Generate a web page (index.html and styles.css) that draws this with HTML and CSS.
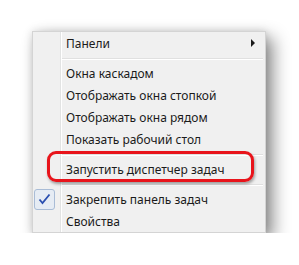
FILE: index.html
```html
<!DOCTYPE html>
<html lang="ru">
<head>
  <meta charset="UTF-8">
  <title>Меню панели задач</title>
  <link rel="stylesheet" href="styles.css">
</head>
<body>

  <div class="menu">
    <div class="item">
      <span class="icon"></span>
      <span class="label">Панели</span>
      <span class="arrow"></span>
    </div>
    <div class="sep"></div>
    <div class="item"><span class="icon"></span><span class="label">Окна каскадом</span></div>
    <div class="item"><span class="icon"></span><span class="label">Отображать окна стопкой</span></div>
    <div class="item"><span class="icon"></span><span class="label">Отображать окна рядом</span></div>
    <div class="item"><span class="icon"></span><span class="label">Показать рабочий стол</span></div>
    <div class="sep"></div>
    <div class="item marked"><span class="icon"></span><span class="label">Запустить диспетчер задач</span></div>
    <div class="sep"></div>
    <div class="item">
      <span class="icon checked">
        <svg width="13" height="12" viewBox="0 0 13 12">
          <path d="M1.5 6.5 L4.5 10 L11.5 1.5" fill="none" stroke="#2a4fb0" stroke-width="1.8"/>
        </svg>
      </span>
      <span class="label">Закрепить панель задач</span>
    </div>
    <div class="item"><span class="icon"></span><span class="label">Свойства</span></div>
  </div>

</body>
</html>
```

FILE: styles.css
```css
body {
  margin: 0;
  padding: 31px 0 0 32px;
  background: #fff;
  font-family: "Noto Sans", "Open Sans", sans-serif;
  font-size: 12px;
  color: #1b1b1b;
}

.menu {
  width: 232px;
  border: 1px solid #d4d4d4;
  background: linear-gradient(to right, #f0f0f0 27px, #e2e3e3 27px 28px, #fff 28px 29px, #f0f0f0 29px);
  box-shadow: 7px 7px 16px rgba(0, 0, 0, 0.45), 0 0 8px rgba(0, 0, 0, 0.12);
}

.item {
  position: relative;
  display: flex;
  align-items: center;
  height: 22px;
}

.icon {
  width: 21px;
  height: 21px;
  margin-left: 1px;
  box-sizing: border-box;
  display: flex;
  align-items: center;
  justify-content: center;
  flex-shrink: 0;
}

.icon.checked {
  border: 1px solid #a9bcd6;
  border-radius: 3px;
  background: #e6ecf4;
}

.label {
  margin-left: 11px;
  flex: 1;
  white-space: nowrap;
}

.arrow {
  width: 0;
  height: 0;
  margin-right: 10px;
  border-top: 4px solid transparent;
  border-bottom: 4px solid transparent;
  border-left: 4px solid #1b1b1b;
}

.sep {
  height: 0;
  margin: 4px 2px 2px 29px;
  border-top: 1px solid #e0e0e0;
  border-bottom: 1px solid #fff;
}

.item.marked::after {
  content: "";
  position: absolute;
  left: 14px;
  right: 11px;
  top: -7px;
  bottom: -2px;
  border: 3px solid #e8141b;
  border-radius: 9px;
  box-shadow: 1px 2px 3px rgba(0, 0, 0, 0.35);
}
```
